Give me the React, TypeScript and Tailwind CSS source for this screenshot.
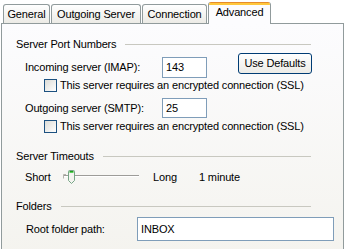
import React from 'react';

const Tab = ({ label, w, ml }: { label: string; w: string; ml: string }) => (
	<div
		className={`${w} ${ml} h-[19px] flex items-center justify-center border border-b-0 border-[#919b9c] rounded-t-[3px] bg-gradient-to-b from-white to-[#ecebe6] leading-none`}
	>
		{label}
	</div>
);

const Section = ({ title, mt }: { title: string; mt: string }) => (
	<div className={`${mt} flex items-center h-[14px] w-[295px]`}>
		<span className="leading-none whitespace-nowrap">{title}</span>
		<div className="flex-1 ml-[9px] h-px bg-[#c8c8c0]" />
	</div>
);

const Check = ({ mt }: { mt: string }) => (
	<div className={`${mt} flex items-center h-[13px] pl-[28px]`}>
		<div className="w-[13px] h-[13px] border border-[#1c5180] bg-gradient-to-br from-[#dcdcd7] to-white" />
		<span className="ml-[3px] leading-none whitespace-nowrap">
			This server requires an encrypted connection (SSL)
		</span>
	</div>
);

const Field = ({ value, w, h }: { value: string; w: string; h: string }) => (
	<div className={`${w} ${h} border border-[#7f9db9] bg-white flex items-center pl-[3px] leading-none`}>
		{value}
	</div>
);

export default function App() {
	return (
		<div className="w-[347px] h-[249px] bg-white overflow-hidden font-['Liberation_Sans',Arial,sans-serif] text-[11px] tracking-[-0.15px] text-black">
			{/* tab strip */}
			<div className="relative z-10 flex items-end h-[23px] pl-[3px]">
				<Tab label="General" w="w-[47px]" ml="ml-0" />
				<Tab label="Outgoing Server" w="w-[90px]" ml="ml-[1px]" />
				<Tab label="Connection" w="w-[65px]" ml="ml-[1px]" />
				<div className="ml-[1px] w-[63px] h-[22px] -mb-px flex flex-col border-x border-[#919b9c] rounded-t-[3px] bg-[#fcfcfe] overflow-hidden">
					<div className="h-[1px] bg-[#e68b2c]" />
					<div className="h-[2px] bg-[#ffc73c]" />
					<div className="flex-1 flex items-start justify-center pt-[2px] leading-none">Advanced</div>
				</div>
			</div>

			{/* panel */}
			<div className="ml-[1px] w-[343px] h-[240px] border border-[#919b9c] bg-gradient-to-b from-[#fcfcfe] to-[#f4f3ee] pl-[14px]">
				<Section title="Server Port Numbers" mt="mt-[13px]" />

				<div className="mt-[6px] flex items-start h-[21px] pl-[9px]">
					<div className="w-[137px] h-[21px] flex items-center leading-none">Incoming server (IMAP):</div>
					<Field value="143" w="w-[45px]" h="h-[21px]" />
					<button className="ml-[31px] -mt-[4px] w-[74px] h-[21px] border border-[#003c74] rounded-[3px] bg-gradient-to-b from-white to-[#ecebe6] leading-none">
						Use Defaults
					</button>
				</div>

				<Check mt="mt-[1px]" />

				<div className="mt-[6px] flex items-center h-[20px] pl-[9px]">
					<div className="w-[137px] leading-none">Outgoing server (SMTP):</div>
					<Field value="25" w="w-[45px]" h="h-[20px]" />
				</div>

				<Check mt="mt-[2px]" />

				<Section title="Server Timeouts" mt="mt-[16px]" />

				<div className="mt-[7px] flex items-center h-[14px] pl-[9px]">
					<div className="w-[37px] leading-none">Short</div>
					<svg width="78" height="16" viewBox="0 0 78 16">
						<line x1="2" y1="6.5" x2="77" y2="6.5" stroke="#9d9c99" />
						<line x1="2" y1="7.5" x2="77" y2="7.5" stroke="#ffffff" />
						<path d="M1.5 9.5 V5.5 H4" fill="none" stroke="#b5b4ad" />
						<path
							d="M6.5 2.5 Q6.5 1.5 7.5 1.5 H11.5 Q12.5 1.5 12.5 2.5 V11.5 L9.5 14.5 L6.5 11.5 Z"
							fill="#f4f4f0"
							stroke="#76a586"
						/>
						<line x1="7.5" y1="2.5" x2="11.5" y2="2.5" stroke="#21a121" />
						<line x1="7.5" y1="3.5" x2="11.5" y2="3.5" stroke="#5bd05b" />
					</svg>
					<div className="ml-[13px] w-[46px] leading-none">Long</div>
					<div className="leading-none">1 minute</div>
				</div>

				<Section title="Folders" mt="mt-[15px]" />

				<div className="mt-[4px] flex items-center h-[24px] pl-[10px]">
					<div className="w-[111px] leading-none">Root folder path:</div>
					<Field value="INBOX" w="w-[197px]" h="h-[24px]" />
				</div>
			</div>
		</div>
	);
}
